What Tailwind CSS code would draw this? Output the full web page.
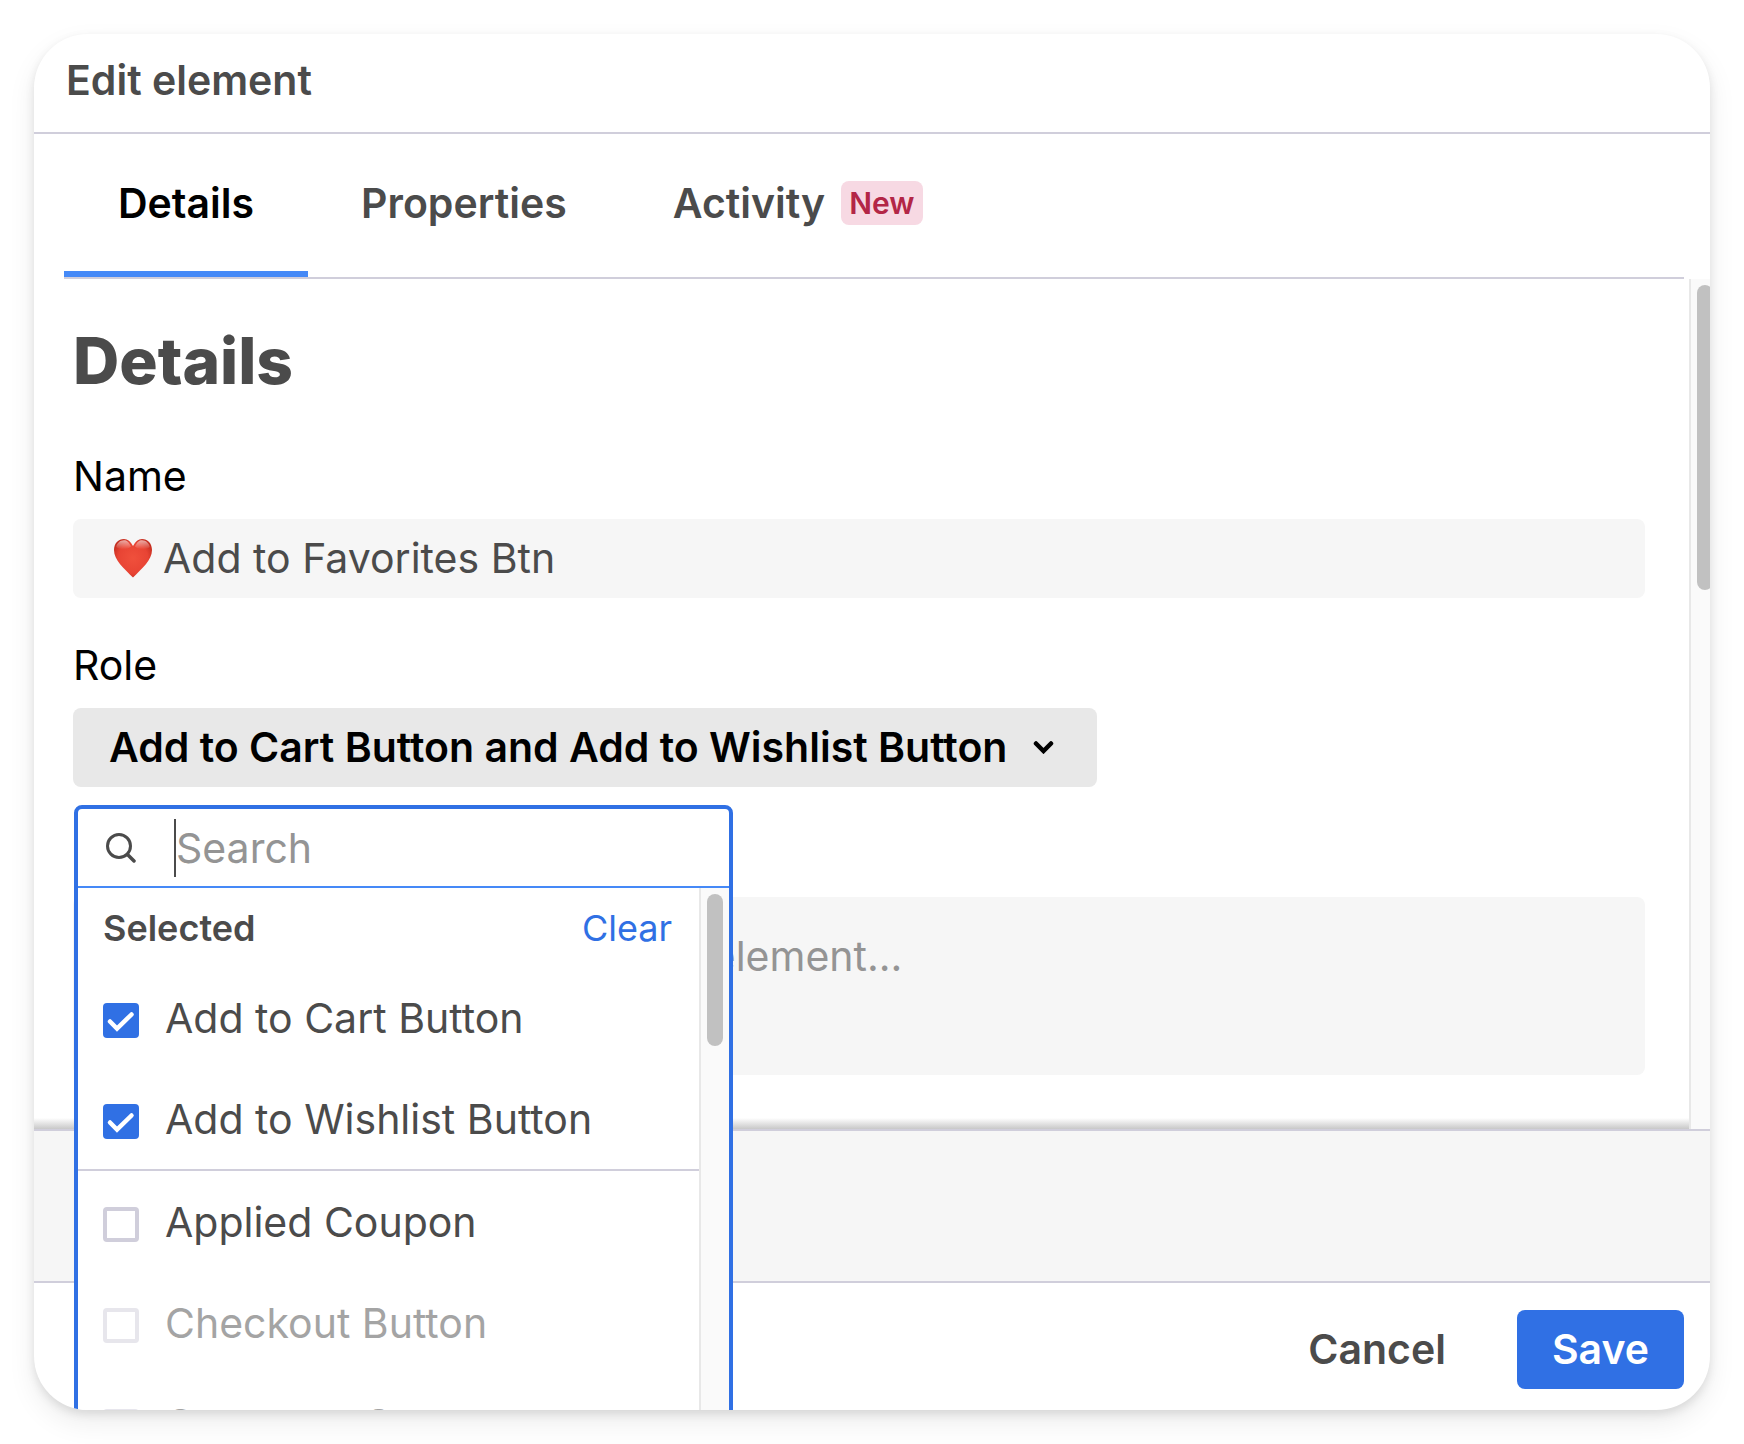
<!DOCTYPE html>
<html lang="en">
<head>
    <meta charset="UTF-8">
    <meta name="viewport" content="width=device-width, initial-scale=1.0">
    <title>Edit element</title>
    <script src="https://cdn.jsdelivr.net/npm/@tailwindcss/browser@4"></script>
</head>
<body class="min-h-screen flex p-[34px] bg-white font-['Inter',sans-serif] text-[41px] leading-[48px] text-[#4b4b4b]">
    <main class="relative flex-1 min-w-0 flex flex-col overflow-hidden rounded-[54px] bg-white shadow-[0_12px_28px_rgba(0,0,0,0.08),0_4px_10px_rgba(0,0,0,0.10)]">

        <header class="border-b-2 border-[#d0cedb] px-8 pt-[22px] pb-7">
            <h1 class="font-semibold">Edit element</h1>
        </header>

        <nav class="ml-[30px] mr-[26px] flex border-b-2 border-[#d0cedb]" role="tablist">
            <button type="button" role="tab" aria-selected="true" class="h-[143px] px-[54px] border-b-6 border-[#4589f7] font-semibold text-black">Details</button>
            <button type="button" role="tab" aria-selected="false" class="h-[143px] px-[53px] border-b-6 border-transparent font-semibold">Properties</button>
            <button type="button" role="tab" aria-selected="false" class="h-[143px] px-[53px] border-b-6 border-transparent font-semibold flex items-center gap-4">
                Activity
                <span class="rounded-lg bg-[#f7d9e3] px-2 text-[30px] leading-[44px] font-semibold text-[#b32646]">New</span>
            </button>
        </nav>

        <div class="relative flex-1 flex">
            <form id="element-form" class="flex-1 min-w-0 flex flex-col gap-[38px] pt-[46px] pl-[39px] pr-[44px] pb-[54px]">
                <h2 class="mb-3 text-[64px] leading-[72px] font-extrabold">Details</h2>

                <div>
                    <label for="name" class="block mb-[14px] leading-[58px] text-black">Name</label>
                    <div class="flex items-center h-[79px] rounded-lg bg-[#f6f6f6] pl-10 pr-9 pb-[2px]">
                        <svg class="w-10 h-10 shrink-0" viewBox="0 0 40 40" aria-label="Heart" role="img">
                            <defs>
                                <radialGradient id="heart-fill" cx="50%" cy="50%" r="60%">
                                    <stop offset="0" stop-color="#f0503c"/>
                                    <stop offset="0.65" stop-color="#e84434"/>
                                    <stop offset="1" stop-color="#bf2a1c"/>
                                </radialGradient>
                                <linearGradient id="heart-shine" x1="0" y1="0" x2="0" y2="1">
                                    <stop offset="0" stop-color="#fff" stop-opacity="0.6"/>
                                    <stop offset="1" stop-color="#fff" stop-opacity="0"/>
                                </linearGradient>
                            </defs>
                            <path fill="url(#heart-fill)" d="M20 8C17.600 3.500 14.600 1 11 1C5.400 1 1 5.400 1 12C1 22 11 30.500 20 39.500C29 30.500 39 22 39 12C39 5.400 34.600 1 29 1C25.400 1 22.400 3.500 20 8Z"/>
                            <path fill="url(#heart-shine)" d="M18 8.500C16 4 13.800 2.200 11 2.200C7 2.200 4 5 3.200 9C7 12 14 12 18 8.500ZM22 8.500C24 4 26.200 2.200 29 2.200C33 2.200 36 5 36.800 9C33 12 26 12 22 8.500Z"/>
                        </svg>
                        <input type="text" id="name" name="name" value="Add to Favorites Btn" class="flex-1 min-w-0 ml-[10px] bg-transparent outline-none">
                    </div>
                </div>

                <div class="relative">
                    <label for="role" class="block mb-[14px] leading-[58px] text-black">Role</label>
                    <button type="button" id="role" aria-haspopup="listbox" aria-expanded="true" class="flex items-center gap-[26px] h-[79px] rounded-lg bg-[#e8e8e8] pl-9 pr-[43px] pb-[2px] font-semibold text-black whitespace-nowrap">
                        Add to Cart Button and Add to Wishlist Button
                        <svg class="w-[21px] h-[14px] shrink-0" viewBox="0 0 21 14" fill="none" stroke="currentColor" stroke-width="4.500" stroke-linecap="round">
                            <path d="M3 3.500L10.500 11L18 3.500"/>
                        </svg>
                    </button>

                    <!-- Role picker -->
                    <div class="absolute z-10 left-px top-full mt-[18px] w-[659px] rounded-lg border-4 border-[#3070e4] bg-white">
                        <div class="flex items-center h-[79px] border-b-2 border-[#4589f7] pl-7">
                            <svg class="w-[31px] h-[31px] shrink-0" viewBox="0 0 31 31" fill="none" stroke="#4b4b4b" stroke-width="3" stroke-linecap="round">
                                <circle cx="13" cy="14" r="11.500"/>
                                <path stroke-width="3.500" d="M21.500 22.500L28 29"/>
                            </svg>
                            <span class="ml-[37px] w-[2px] h-[58px] shrink-0 bg-[#4b4b4b]"></span>
                            <input type="text" aria-label="Search roles" placeholder="Search" class="flex-1 min-w-0 bg-transparent outline-none placeholder:text-[#949494]">
                        </div>
                        <div class="flex">
                            <div class="flex-1 min-w-0">
                                <div class="flex items-center justify-between h-[79px] pl-[25px] pr-[27px] text-[36px]">
                                    <span class="font-semibold">Selected</span>
                                    <button type="button" class="text-[#3070e4]">Clear</button>
                                </div>
                                <label class="flex items-center gap-[26px] h-[101px] pl-[25px]">
                                    <span class="relative mt-[6px] w-9 h-[35px] shrink-0">
                                        <input type="checkbox" name="roles" value="add-to-cart" checked class="block appearance-none w-9 h-[35px] rounded-sm bg-[#3070e4]">
                                        <svg class="absolute inset-0 w-9 h-[35px] pointer-events-none" viewBox="0 0 36 35" fill="none" stroke="#fff" stroke-width="4.500" stroke-linecap="round"><path d="M7 18.500L14 25.500L28.500 11.500"/></svg>
                                    </span>
                                    Add to Cart Button
                                </label>
                                <label class="flex items-center gap-[26px] h-[101px] pl-[25px]">
                                    <span class="relative mt-[6px] w-9 h-[35px] shrink-0">
                                        <input type="checkbox" name="roles" value="add-to-wishlist" checked class="block appearance-none w-9 h-[35px] rounded-sm bg-[#3070e4]">
                                        <svg class="absolute inset-0 w-9 h-[35px] pointer-events-none" viewBox="0 0 36 35" fill="none" stroke="#fff" stroke-width="4.500" stroke-linecap="round"><path d="M7 18.500L14 25.500L28.500 11.500"/></svg>
                                    </span>
                                    Add to Wishlist Button
                                </label>
                                <hr class="border-t-2 border-[#d0cedb]">
                                <label class="flex items-center gap-[26px] h-[101px] pl-[25px]">
                                    <input type="checkbox" name="roles" value="applied-coupon" class="appearance-none mt-[6px] w-9 h-[35px] shrink-0 rounded-sm border-4 border-[#d0cedb] bg-white">
                                    Applied Coupon
                                </label>
                                <label class="flex items-center gap-[26px] h-[101px] pl-[25px] opacity-50">
                                    <input type="checkbox" name="roles" value="checkout-button" disabled class="appearance-none mt-[6px] w-9 h-[35px] shrink-0 rounded-sm border-4 border-[#d0cedb] bg-white">
                                    Checkout Button
                                </label>
                                <label class="flex items-center gap-[26px] h-[101px] pl-[25px] opacity-50">
                                    <input type="checkbox" name="roles" value="customer-support" disabled class="appearance-none mt-[6px] w-9 h-[35px] shrink-0 rounded-sm border-4 border-[#d0cedb] bg-white">
                                    Customer Support
                                </label>
                            </div>
                            <div class="w-[30px] border-l-2 border-[#e8e8e8] bg-[#fafafa] pt-[6px] pl-[6px]">
                                <div class="w-4 h-[152px] rounded-full bg-[#c1c1c1]"></div>
                            </div>
                        </div>
                    </div>
                </div>

                <div>
                    <label for="description" class="block mb-[14px] leading-[58px] text-black">Description</label>
                    <textarea id="description" name="description" placeholder="Provide a description of this UI element..." class="block w-full h-[178px] resize-none rounded-lg bg-[#f6f6f6] px-8 pt-[35px] outline-none placeholder:text-[#949494]"></textarea>
                </div>
            </form>

            <!-- Scroll shadow and scrollbar -->
            <div class="absolute left-0 right-[21px] bottom-0 h-[11px] bg-linear-to-b from-transparent to-[#c8c8c8] pointer-events-none"></div>
            <div class="w-[21px] shrink-0 overflow-hidden border-l-2 border-[#e8e8e8] bg-[#fafafa] pt-[6px] pl-[6px]">
                <div class="w-4 h-[305px] rounded-lg bg-[#c1c1c1]"></div>
            </div>
        </div>

        <div class="h-[154px] border-y-2 border-[#d0cedb] bg-[#f6f6f6]"></div>

        <footer class="flex justify-end pt-[27px] pb-[21px] pr-[26px]">
            <button type="button" class="h-[79px] px-[35px] pb-[2px] font-semibold">Cancel</button>
            <button type="submit" form="element-form" class="ml-9 h-[79px] px-[35px] pb-[2px] rounded-lg bg-[#3070e4] font-semibold text-white">Save</button>
        </footer>
    </main>
</body>
</html>
